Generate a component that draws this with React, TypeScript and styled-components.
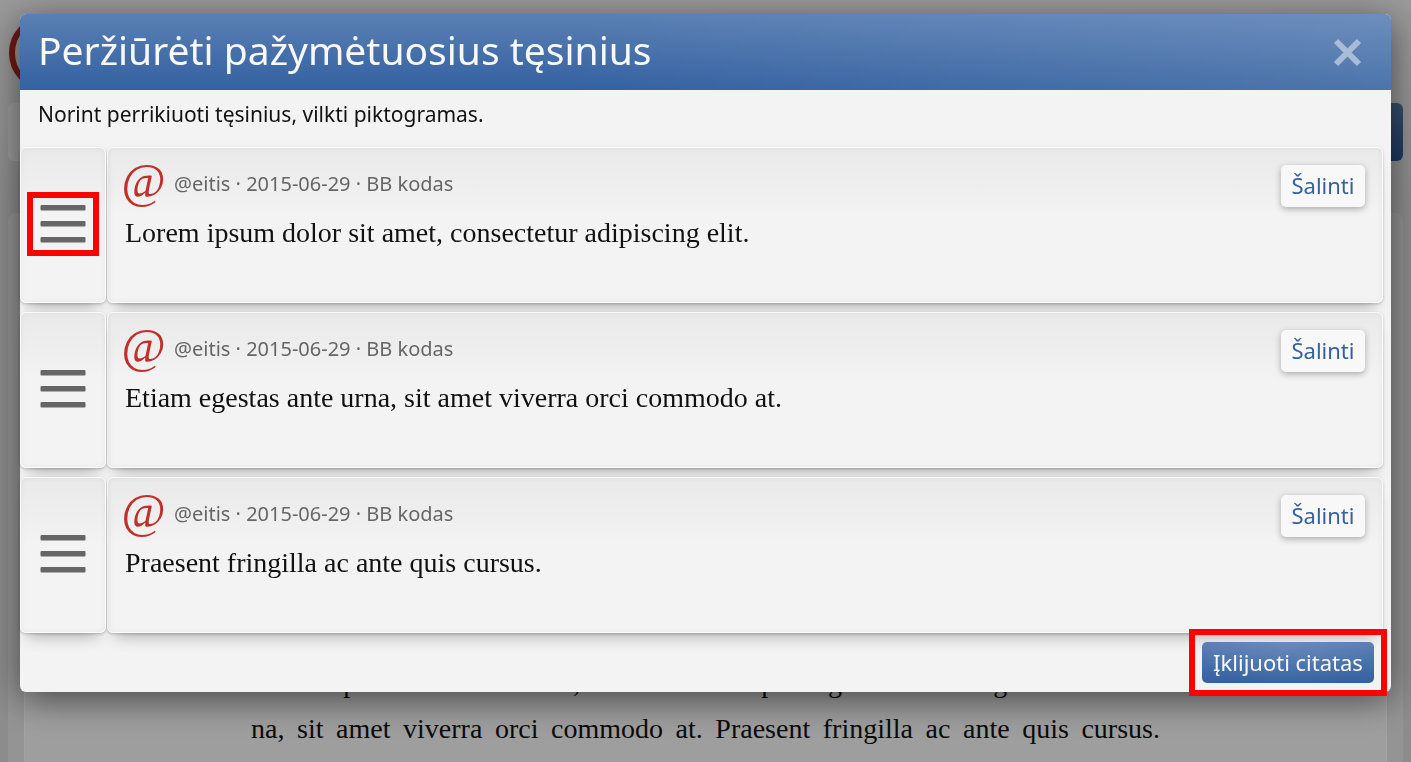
import React from 'react';
import styled, { createGlobalStyle, css } from 'styled-components';

const sans = "'Noto Sans', 'Open Sans', sans-serif";
const serif = "'Liberation Serif', 'Times New Roman', serif";
const blueFace = css`
  background:
    radial-gradient(ellipse at 50% 0, rgba(255, 255, 255, 0.1), transparent 80%),
    linear-gradient(#5a7fb4, #3461a0);
`;

const GlobalStyle = createGlobalStyle`
  * { box-sizing: border-box; }
  html, body { margin: 0; height: 100%; overflow: hidden; }
  body { font-family: ${sans}; background: #e4e4e4; color: #111; }
  button { font-family: inherit; cursor: pointer; }
`;

const Page = styled.main`
  display: flex;
  flex-direction: column;
  padding: 14px 8px 0;
  height: 100vh;
  overflow: hidden;
  background: linear-gradient(#f0f0f0, #dcdcdc 200px, #dcdcdc);
`;

const SiteHeader = styled.header`
  height: 89px;
`;

const Toolbar = styled.div`
  display: flex;
  justify-content: space-between;
  height: 58px;
  border-radius: 6px;
  background: #f2f2f2;
`;

const ToolbarButton = styled.button`
  width: 120px;
  border: 0;
  border-radius: 6px;
  background: linear-gradient(#557ba8, #2d5898);
`;

const Thread = styled.section`
  flex: 1;
  margin-top: 52px;
  padding: 16px 16px 0;
  border-radius: 8px 8px 0 0;
  background: #e8e8e8;
`;

const Post = styled.article`
  height: 100%;
  padding: 430px 226px 0;
  border: 1px solid #fff;
  border-bottom: 0;
  background: #f8f8f8;
`;

const PostLine = styled.p`
  margin: 0;
  font: 28px/46px ${serif};
  text-align: justify;
  text-align-last: justify;
  white-space: nowrap;
`;

const Backdrop = styled.div`
  position: fixed;
  inset: 0;
  padding: 14px 20px;
  background: rgba(0, 0, 0, 0.36);
`;

const Dialog = styled.section`
  border-radius: 6px;
  background: #f3f3f3;
  box-shadow: 0 8px 36px rgba(0, 0, 0, 0.55);
`;

const DialogHeader = styled.header`
  display: flex;
  align-items: center;
  justify-content: space-between;
  height: 76px;
  padding: 0 28px 0 18px;
  border-radius: 6px 6px 0 0;
  background:
    linear-gradient(100deg, transparent 40%, rgba(255, 255, 255, 0.12)),
    linear-gradient(#5a7fb4, #3461a0);
`;

const Title = styled.h1`
  margin: 0;
  padding-bottom: 4px;
  color: #f8f8f8;
  font-size: 39px;
  font-weight: 400;
  line-height: 56px;
`;

const CloseButton = styled.button`
  display: flex;
  padding: 0;
  border: 0;
  background: none;
  color: #a8bcd8;
`;

const Hint = styled.p`
  margin: 0;
  padding: 8px 18px 17px;
  font-size: 21px;
  line-height: 32px;
`;

const QuoteList = styled.ul`
  display: flex;
  flex-direction: column;
  gap: 9px;
  margin: 0;
  padding: 0 8px 0 0;
  list-style: none;
`;

const QuoteRow = styled.li`
  display: grid;
  grid-template-columns: 86px 1fr;
  gap: 1px;
  height: 156px;
`;

const raised = css`
  border: 1px solid #fcfcfc;
  border-radius: 6px;
  background: linear-gradient(#e9e9e9, #f3f3f3 44%);
  box-shadow:
    0 1px 3px rgba(0, 0, 0, 0.22),
    0 12px 14px -8px rgba(0, 0, 0, 0.26),
    inset 0 0 5px rgba(0, 0, 0, 0.05);
`;

const HandleCell = styled.div`
  ${raised}
  position: relative;
  z-index: 1;
  display: flex;
  align-items: center;
  justify-content: center;
  padding-bottom: 2px;
`;

const DragHandle = styled.button<{ $marked?: boolean }>`
  display: flex;
  align-items: center;
  justify-content: center;
  width: 72px;
  height: 64px;
  padding: 0;
  border: 6px solid ${({ $marked }) => ($marked ? '#f00' : 'transparent')};
  background: none;
  color: #666;
`;

const QuoteCell = styled.article`
  ${raised}
  display: flex;
  align-items: flex-start;
  justify-content: space-between;
  padding: 17px 17px 0 15px;
`;

const QuoteMeta = styled.div`
  display: flex;
  align-items: center;
  gap: 10px;
  height: 38px;
  color: #666;
  font-size: 20px;
  line-height: 28px;
`;

const Avatar = styled.span`
  display: flex;
  justify-content: center;
  width: 41px;
  padding-bottom: 6px;
  color: #c0302a;
  font: 48px/36px ${serif};
`;

const QuoteText = styled.p`
  margin: 12px 0 0 2px;
  font: 28px/36px ${serif};
`;

const RemoveButton = styled.button`
  height: 42px;
  width: 84px;
  padding: 0 0 2px;
  border: 0;
  border-radius: 5px;
  background: #f8f8f8;
  box-shadow: 0 2px 6px rgba(0, 0, 0, 0.3);
  color: #3461a0;
  font-size: 22px;
`;

const DialogFooter = styled.footer`
  display: flex;
  justify-content: flex-end;
  height: 59px;
  padding: 9px 17px 0;
`;

const PasteButton = styled.button`
  ${blueFace}
  position: relative;
  z-index: 2;
  width: 172px;
  height: 41px;
  padding: 0 0 2px;
  border: 0;
  border-radius: 5px;
  color: #f8f8f8;
  font-size: 22px;
  white-space: nowrap;

  &::after {
    content: '';
    position: absolute;
    inset: -13px;
    border: 6px solid #f00;
  }
`;

const quotes = [
  'Lorem ipsum dolor sit amet, consectetur adipiscing elit.',
  'Etiam egestas ante urna, sit amet viverra orci commodo at.',
  'Praesent fringilla ac ante quis cursus.',
];

export default function App() {
  return (
    <>
      <GlobalStyle />
      <Page>
        <SiteHeader>
          <svg width="76" height="80" viewBox="0 0 76 80" fill="none" stroke="#b02820" aria-hidden="true">
            <ellipse cx="36" cy="39" rx="32" ry="34" strokeWidth="6" />
            <ellipse cx="36" cy="39" rx="12" ry="16" strokeWidth="5" />
          </svg>
        </SiteHeader>
        <Toolbar>
          <span />
          <ToolbarButton aria-label="Meniu" />
        </Toolbar>
        <Thread>
          <Post>
            <PostLine>Lorem ipsum dolor sit amet, consectetur adipiscing elit. Etiam egestas ante ur-</PostLine>
            <PostLine>na, sit amet viverra orci commodo at. Praesent fringilla ac ante quis cursus.</PostLine>
          </Post>
        </Thread>
      </Page>
      <Backdrop>
        <Dialog role="dialog" aria-labelledby="dialog-title">
          <DialogHeader>
            <Title id="dialog-title">Peržiūrėti pažymėtuosius tęsinius</Title>
            <CloseButton aria-label="Uždaryti">
              <svg width="31" height="31" viewBox="0 0 31 31" fill="none" stroke="currentColor" strokeWidth="6" strokeLinecap="butt">
                <path d="M4 4 27 27M27 4 4 27" />
              </svg>
            </CloseButton>
          </DialogHeader>
          <Hint>Norint perrikiuoti tęsinius, vilkti piktogramas.</Hint>
          <QuoteList>
            {quotes.map((text, index) => (
              <QuoteRow key={text}>
                <HandleCell>
                  <DragHandle $marked={index === 0} aria-label="Vilkti">
                    <svg width="46" height="38" viewBox="0 0 46 38" fill="currentColor">
                      <rect x="0.5" width="45" height="5.5" rx="1" />
                      <rect x="0.5" y="16" width="45" height="5.5" rx="1" />
                      <rect x="0.5" y="32" width="45" height="5.5" rx="1" />
                    </svg>
                  </DragHandle>
                </HandleCell>
                <QuoteCell>
                  <div>
                    <QuoteMeta>
                      <Avatar aria-hidden="true">@</Avatar>
                      <span>@eitis · 2015-06-29 · BB kodas</span>
                    </QuoteMeta>
                    <QuoteText>{text}</QuoteText>
                  </div>
                  <RemoveButton>Šalinti</RemoveButton>
                </QuoteCell>
              </QuoteRow>
            ))}
          </QuoteList>
          <DialogFooter>
            <PasteButton>Įklijuoti citatas</PasteButton>
          </DialogFooter>
        </Dialog>
      </Backdrop>
    </>
  );
}
